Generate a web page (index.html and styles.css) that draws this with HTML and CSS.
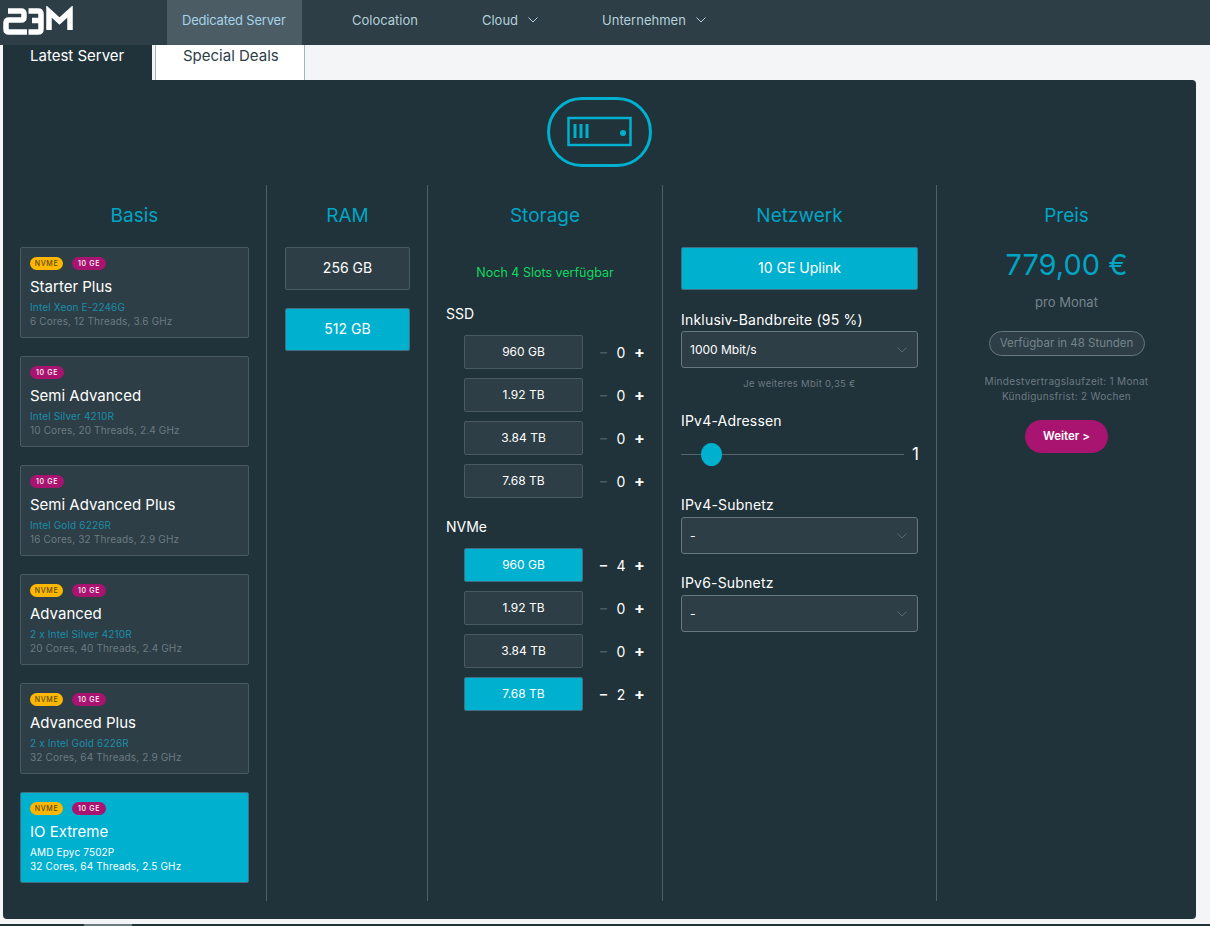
FILE: index.html
```html
<!DOCTYPE html>
<html lang="de">
  <head>
    <meta charset="UTF-8" />
    <title>Dedicated Server</title>
    <link rel="stylesheet" href="styles.css">
  </head>
  <body>
    <!-- NAVIGATION -->
    <header class="navbar">
      <svg class="logo" width="75" height="30" viewBox="0 0 75 30" fill="none" stroke="#fff" stroke-width="5.500">
        <path d="M7 5H20Q23 5 23 8V11Q23 14 20 14H8Q5 14 5 17V23Q5 26 8 26H26" />
        <path d="M27.500 5H37Q40 5 40 8V23Q40 26 37 26H27.500M31 14.500H39" />
        <path d="M48 24V5.500L58.500 15L69 5.500V24" />
      </svg>
      <nav class="nav-links">
        <a class="nav-item active">Dedicated Server</a>
        <a class="nav-item first">Colocation</a>
        <a class="nav-item">Cloud
          <svg width="10" height="6" viewBox="0 0 10 6" fill="none" stroke="currentColor"><path d="M.5.5 5 5 9.500 .5" /></svg>
        </a>
        <a class="nav-item">Unternehmen
          <svg width="10" height="6" viewBox="0 0 10 6" fill="none" stroke="currentColor"><path d="M.5.5 5 5 9.500 .5" /></svg>
        </a>
      </nav>
    </header>

    <!-- TABS -->
    <div class="tabs">
      <div class="tab current">Latest Server</div>
      <div class="tab">Special Deals</div>
    </div>

    <main class="panel">
      <div class="server-icon">
        <svg width="105" height="70" viewBox="0 0 105 70" fill="none" stroke="#00b0cf">
          <rect x="1.500" y="1.500" width="102" height="67" rx="33.500" stroke-width="3" />
          <rect x="21.500" y="21" width="62" height="27" stroke-width="2.500" />
          <path d="M28 27v14M34 27v14M40 27v14" stroke-width="3" />
          <circle cx="76" cy="36" r="3" fill="#00b0cf" stroke="none" />
        </svg>
      </div>

      <div class="columns">
        <!-- BASIS -->
        <section class="col col-basis">
          <h2>Basis</h2>
          <div class="card">
            <div class="badges"><span class="badge nvme">NVME</span><span class="badge ge">10 GE</span></div>
            <h3>Starter Plus</h3>
            <p class="cpu">Intel Xeon E-2246G</p>
            <p class="specs">6 Cores, 12 Threads, 3.6 GHz</p>
          </div>
          <div class="card">
            <div class="badges"><span class="badge ge">10 GE</span></div>
            <h3>Semi Advanced</h3>
            <p class="cpu">Intel Silver 4210R</p>
            <p class="specs">10 Cores, 20 Threads, 2.4 GHz</p>
          </div>
          <div class="card">
            <div class="badges"><span class="badge ge">10 GE</span></div>
            <h3>Semi Advanced Plus</h3>
            <p class="cpu">Intel Gold 6226R</p>
            <p class="specs">16 Cores, 32 Threads, 2.9 GHz</p>
          </div>
          <div class="card">
            <div class="badges"><span class="badge nvme">NVME</span><span class="badge ge">10 GE</span></div>
            <h3>Advanced</h3>
            <p class="cpu">2 x Intel Silver 4210R</p>
            <p class="specs">20 Cores, 40 Threads, 2.4 GHz</p>
          </div>
          <div class="card">
            <div class="badges"><span class="badge nvme">NVME</span><span class="badge ge">10 GE</span></div>
            <h3>Advanced Plus</h3>
            <p class="cpu">2 x Intel Gold 6226R</p>
            <p class="specs">32 Cores, 64 Threads, 2.9 GHz</p>
          </div>
          <div class="card selected">
            <div class="badges"><span class="badge nvme">NVME</span><span class="badge ge">10 GE</span></div>
            <h3>IO Extreme</h3>
            <p class="cpu">AMD Epyc 7502P</p>
            <p class="specs">32 Cores, 64 Threads, 2.5 GHz</p>
          </div>
        </section>

        <!-- RAM -->
        <section class="col col-ram">
          <h2>RAM</h2>
          <div class="option big">256 GB</div>
          <div class="option big selected">512 GB</div>
        </section>

        <!-- STORAGE -->
        <section class="col col-storage">
          <h2>Storage</h2>
          <p class="slots">Noch 4 Slots verfügbar</p>
          <h4 class="disk-title">SSD</h4>
          <div class="disk"><div class="option">960 GB</div><div class="stepper"><span class="minus off">–</span><span class="count">0</span><span class="plus">+</span></div></div>
          <div class="disk"><div class="option">1.92 TB</div><div class="stepper"><span class="minus off">–</span><span class="count">0</span><span class="plus">+</span></div></div>
          <div class="disk"><div class="option">3.84 TB</div><div class="stepper"><span class="minus off">–</span><span class="count">0</span><span class="plus">+</span></div></div>
          <div class="disk"><div class="option">7.68 TB</div><div class="stepper"><span class="minus off">–</span><span class="count">0</span><span class="plus">+</span></div></div>
          <h4 class="disk-title nvme-title">NVMe</h4>
          <div class="disk"><div class="option selected">960 GB</div><div class="stepper"><span class="minus">–</span><span class="count">4</span><span class="plus">+</span></div></div>
          <div class="disk"><div class="option">1.92 TB</div><div class="stepper"><span class="minus off">–</span><span class="count">0</span><span class="plus">+</span></div></div>
          <div class="disk"><div class="option">3.84 TB</div><div class="stepper"><span class="minus off">–</span><span class="count">0</span><span class="plus">+</span></div></div>
          <div class="disk"><div class="option selected">7.68 TB</div><div class="stepper"><span class="minus">–</span><span class="count">2</span><span class="plus">+</span></div></div>
        </section>

        <!-- NETZWERK -->
        <section class="col col-net">
          <h2>Netzwerk</h2>
          <div class="option big selected">10 GE Uplink</div>
          <label class="field-label bandwidth">Inklusiv-Bandbreite (95 %)</label>
          <div class="select">1000 Mbit/s
            <svg width="10" height="6" viewBox="0 0 10 6" fill="none" stroke="currentColor"><path d="M.5.5 5 5 9.500 .5" /></svg>
          </div>
          <p class="hint">Je weiteres Mbit 0,35 €</p>
          <label class="field-label ipv4">IPv4-Adressen</label>
          <div class="slider">
            <div class="track"><span class="thumb"></span></div>
            <span class="slider-value">1</span>
          </div>
          <label class="field-label subnet4">IPv4-Subnetz</label>
          <div class="select">-
            <svg width="10" height="6" viewBox="0 0 10 6" fill="none" stroke="currentColor"><path d="M.5.5 5 5 9.500 .5" /></svg>
          </div>
          <label class="field-label subnet6">IPv6-Subnetz</label>
          <div class="select">-
            <svg width="10" height="6" viewBox="0 0 10 6" fill="none" stroke="currentColor"><path d="M.5.5 5 5 9.500 .5" /></svg>
          </div>
        </section>

        <!-- PREIS -->
        <section class="col col-price">
          <h2>Preis</h2>
          <div class="price">779,00 €</div>
          <p class="per-month">pro Monat</p>
          <div class="availability">Verfügbar in 48 Stunden</div>
          <p class="terms">Mindestvertragslaufzeit: 1 Monat<br>Kündigunsfrist: 2 Wochen</p>
          <button class="next">Weiter &gt;</button>
        </section>
      </div>
    </main>
    <div class="page-end"><span class="page-end-mark"></span></div>
  </body>
</html>
```

FILE: styles.css
```css
* {
  box-sizing: border-box;
}

html,
body {
  height: 926px;
  overflow: hidden;
}

body {
  margin: 0;
  font-family: Inter, "Noto Sans", sans-serif;
  background: #f4f5f7;
  color: #fff;
}

h2,
h3,
h4,
p {
  margin: 0;
  font-weight: 400;
}

.navbar {
  display: flex;
  height: 45px;
  background: #2d3e46;
}

.logo {
  margin: 6px 0 0 1px;
}

.nav-links {
  display: flex;
  margin-left: 91px;
}

.nav-item {
  display: flex;
  align-items: center;
  gap: 10px;
  padding: 0 32px;
  font-size: 13px;
  color: #b4d0da;
  height: 40px;
}

.nav-item.active {
  height: 45px;
  padding: 0 15px 5px;
  width: 135px;
  white-space: nowrap;
  background: #4b5c65;
  color: #a6d3e8;
  letter-spacing: -0.2px;
}

.nav-item.first {
  margin-left: 18px;
}

.tabs {
  display: flex;
  height: 35px;
  margin-left: 3px;
}

.tab {
  width: 150px;
  padding: 1px 0 0 27px;
  font-size: 15px;
  line-height: 19px;
  color: #2d3e46;
  background: #fff;
  border-left: 1px solid #a7b4bc;
  border-right: 1px solid #a7b4bc;
  margin-left: 3px;
}

.tab.current {
  width: 149px;
  margin-left: 0;
  border: none;
  background: #20323a;
  color: #fff;
}

.panel {
  width: 1193px;
  height: 839px;
  margin-left: 3px;
  padding-top: 17px;
  background: #20323a;
  border-radius: 0 4px 4px 4px;
}

.server-icon {
  display: flex;
  justify-content: center;
  height: 70px;
  margin: 0 0 18px -1px;
}

.columns {
  display: grid;
  grid-template-columns: 264px 161px 235px 274px 259px;
  height: 716px;
}

.col {
  padding: 20px 18px 0;
  border-right: 1px solid #4f5f67;
}

.col:last-child {
  border-right: none;
}

h2 {
  height: 21px;
  margin-bottom: 21px;
  font-size: 19px;
  line-height: 21px;
  text-align: center;
  color: #00a5c4;
}

.col-basis {
  padding: 20px 17px 0;
}

/* karten */
.card {
  height: 91px;
  margin-bottom: 18px;
  padding: 9px 9px 0;
  background: #2d3e46;
  border: 1px solid #4a5a62;
  border-radius: 2px;
}

.badges {
  display: flex;
  gap: 9px;
  height: 13px;
}

.badge {
  display: block;
  width: 34px;
  height: 13px;
  border-radius: 7px;
  font-size: 7px;
  font-weight: 500;
  line-height: 13px;
  letter-spacing: 0.7px;
  text-align: center;
  background: #a81470;
}

.badge.nvme {
  width: 33px;
  background: #fdb700;
  color: #5c4a10;
}

.card h3 {
  margin-top: 8px;
  font-size: 15px;
  line-height: 17px;
}

.cpu {
  margin-top: 5px;
  font-size: 10px;
  line-height: 14px;
  letter-spacing: 0.15px;
  color: #1a8eab;
}

.specs {
  font-size: 10px;
  line-height: 14px;
  letter-spacing: 0.15px;
  color: #6c7b82;
}

.card.selected {
  background: #00b0cf;
  border-color: #3f6f80;
}

.card.selected .cpu,
.card.selected .specs {
  color: #fff;
}

/* optionen */
.option {
  display: flex;
  flex-shrink: 0;
  align-items: center;
  justify-content: center;
  width: 119px;
  height: 34px;
  padding-bottom: 1px;
  font-size: 12px;
  background: #2d3e46;
  border: 1px solid #4a5a62;
  border-radius: 2px;
}

.option.big {
  width: 100%;
  height: 43px;
  margin-bottom: 18px;
  padding-bottom: 2px;
  font-size: 14px;
}

.option.selected {
  background: #00b0cf;
  border-color: #3f6f80;
}

.col-ram {
  padding-right: 17px;
}

.slots {
  margin-top: 39px;
  font-size: 12.500px;
  line-height: 16px;
  text-align: center;
  color: #0fd95f;
}

.disk-title {
  margin: 24px 0 13px;
  font-size: 14px;
  line-height: 17px;
}

.nvme-title {
  margin-top: 20px;
  margin-bottom: 13px;
}

.disk {
  display: flex;
  align-items: center;
  margin: 0 0 9px 18px;
}

.stepper {
  display: flex;
  align-items: center;
  flex-shrink: 0;
  margin-left: 17px;
  font-size: 14px;
}

.minus {
  width: 9px;
  font-weight: 600;
  line-height: 1;
}

.minus.off {
  color: #4a5a62;
}

.count {
  width: 12px;
  margin: 0 7px 0 6px;
  text-align: center;
}

.plus {
  font-size: 16px;
  font-weight: 700;
  line-height: 1;
}

/* netzwerk */
.field-label {
  display: block;
  height: 17px;
  font-size: 14px;
  line-height: 17px;
  letter-spacing: 0.2px;
}

.bandwidth {
  margin-top: 21px;
  margin-bottom: 3px;
}

.ipv4 {
  margin-top: 22px;
}

.subnet4 {
  margin-top: 0;
  margin-bottom: 4px;
}

.subnet6 {
  margin-top: 20px;
  margin-bottom: 4px;
}

.select {
  display: flex;
  align-items: center;
  justify-content: space-between;
  height: 37px;
  padding: 0 10px 0 8px;
  font-size: 12px;
  background: #2d3e46;
  border: 1px solid #66777f;
  border-radius: 3px;
}

.select svg {
  color: #56666e;
}

.hint {
  margin-top: 10px;
  font-size: 9.500px;
  line-height: 12px;
  letter-spacing: 0.3px;
  text-align: center;
  color: #6c7b82;
}

.slider {
  display: flex;
  align-items: center;
  height: 24px;
  margin: 13px 0 30px;
}

.track {
  position: relative;
  flex-shrink: 0;
  width: 223px;
  height: 1px;
  background: #56666e;
}

.thumb {
  position: absolute;
  left: 20px;
  top: -11px;
  width: 21px;
  height: 23px;
  border-radius: 50%;
  background: #00b0cf;
}

.slider-value {
  margin-left: 8px;
  font-size: 17px;
}

/* preis */
.col-price {
  display: flex;
  flex-direction: column;
  align-items: center;
}

.col-price h2 {
  margin-bottom: 20px;
}

.price {
  font-size: 29px;
  line-height: 38px;
  color: #00a5c4;
}

.per-month {
  margin-top: 10px;
  font-size: 13px;
  line-height: 16px;
  color: #75848b;
}

.availability {
  width: 156px;
  height: 25px;
  margin-top: 21px;
  font-size: 11.500px;
  line-height: 23px;
  text-align: center;
  color: #75848b;
  background: #2d3e46;
  border: 1px solid #66777f;
  border-radius: 13px;
}

.terms {
  margin-top: 18px;
  font-size: 10px;
  line-height: 15px;
  letter-spacing: 0.3px;
  text-align: center;
  white-space: nowrap;
  color: #6c7b82;
}

.next {
  width: 83px;
  height: 33px;
  margin-top: 16px;
  padding: 0 0 2px;
  font-family: inherit;
  font-size: 11.500px;
  font-weight: 600;
  color: #fff;
  background: #a81470;
  border: none;
  border-radius: 17px;
}

.page-end {
  height: 2px;
  margin-top: 5px;
  background: #20323a;
}

.page-end-mark {
  display: block;
  width: 48px;
  height: 2px;
  margin-left: 84px;
  background: #6c7b82;
}
```
